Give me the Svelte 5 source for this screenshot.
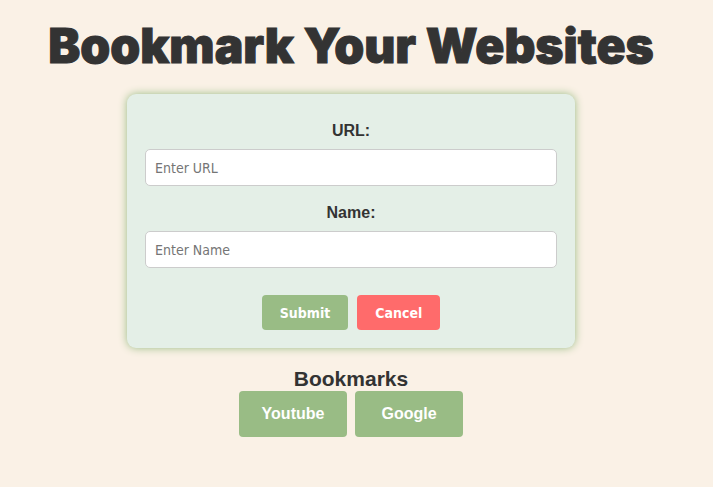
<script>
  let url = $state('');
  let name = $state('');
  let bookmarks = $state([
    { name: 'Youtube', url: '#youtube' },
    { name: 'Google', url: '#google' }
  ]);

  function save(event) {
    event.preventDefault();
    if (!url || !name) return;
    bookmarks.push({ name, url });
    clear();
  }

  function clear() {
    url = '';
    name = '';
  }
</script>

<main>
  <h1>Bookmark Your Websites</h1>

  <form onsubmit={save}>
    <label for="url">URL:</label>
    <input id="url" type="text" placeholder="Enter URL" bind:value={url} />
    <label for="name">Name:</label>
    <input id="name" type="text" placeholder="Enter Name" bind:value={name} />
    <div class="actions">
      <button type="submit">Submit</button>
      <button type="button" class="cancel" onclick={clear}>Cancel</button>
    </div>
  </form>

  <h2>Bookmarks</h2>
  <nav>
    {#each bookmarks as bookmark}
      <a href={bookmark.url}>{bookmark.name}</a>
    {/each}
  </nav>
</main>

<style>
  :global(body) {
    margin: 0;
    background: #faf1e6;
  }

  main {
    display: flex;
    flex-direction: column;
    align-items: center;
    padding: 16px 11px 16px 0;
    color: #333;
    font-family: Arial, "Liberation Sans", sans-serif;
  }

  h1 {
    margin: 0;
    font-family: "Arial Black", Inter, "Liberation Sans", sans-serif;
    font-size: 48px;
    font-weight: 900;
    line-height: 60px;
    text-align: center;
    -webkit-text-stroke: 1px #333;
  }

  form {
    box-sizing: border-box;
    display: flex;
    flex-direction: column;
    width: 100%;
    max-width: 448px;
    margin: 18px 0;
    padding: 18px;
    border-radius: 9px;
    background: #e4efe7;
    box-shadow: 0 0 9px #99bc85;
  }

  label {
    margin: 9px 0 8px;
    font-size: 16px;
    font-weight: bold;
    line-height: 20px;
    text-align: center;
  }

  input {
    box-sizing: border-box;
    width: 100%;
    height: 37px;
    margin-bottom: 8px;
    padding: 0 9px;
    border: 1px solid #ccc;
    border-radius: 5px;
    background: #fff;
    font-family: Tahoma, "DejaVu Sans Condensed", "Noto Sans", sans-serif;
    font-size: 14px;
  }

  input::placeholder {
    color: #757575;
  }

  .actions {
    display: flex;
    justify-content: center;
    gap: 9px;
    margin-top: 19px;
  }

  button {
    height: 35px;
    padding: 0 18px;
    border: 0;
    border-radius: 4px;
    background: #99bc85;
    color: #fff;
    font-family: Tahoma, "DejaVu Sans Condensed", "Noto Sans", sans-serif;
    font-size: 14px;
    font-weight: bold;
  }

  .cancel {
    background: #ff6b6b;
  }

  h2 {
    margin: 0;
    font-size: 21px;
    line-height: 25px;
  }

  nav {
    display: flex;
    flex-wrap: wrap;
    justify-content: center;
    gap: 8px;
  }

  a {
    width: 108px;
    border-radius: 4px;
    background: #99bc85;
    color: #fff;
    font-size: 16px;
    font-weight: bold;
    line-height: 46px;
    text-align: center;
    text-decoration: none;
  }
</style>
